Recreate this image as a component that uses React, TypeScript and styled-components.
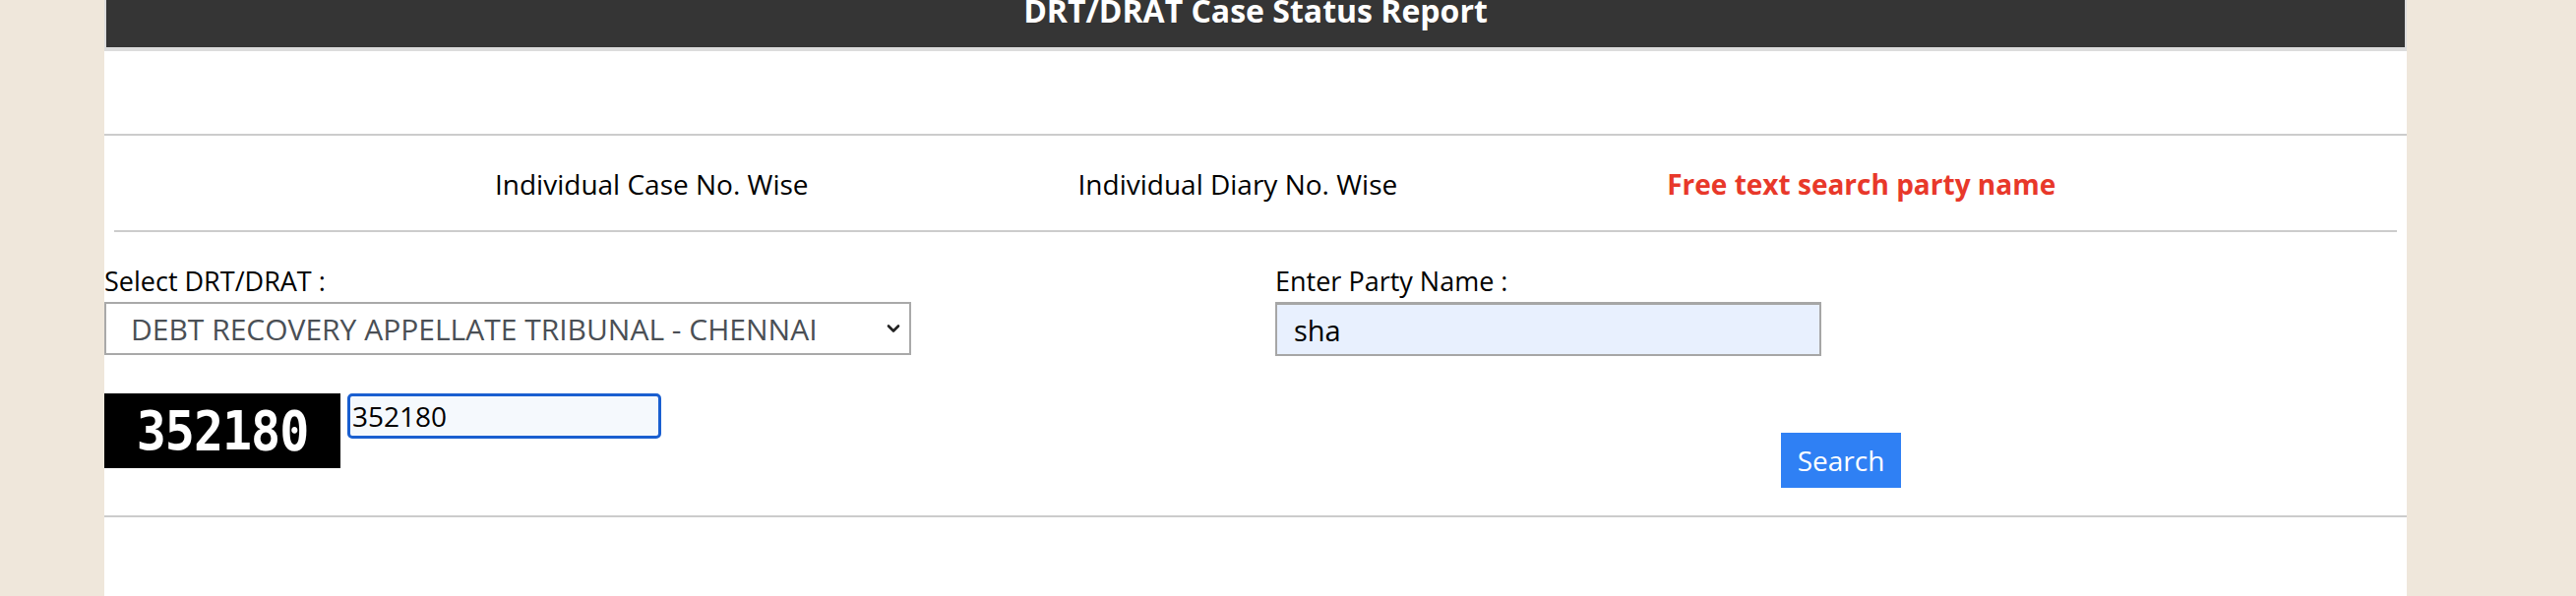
import React, { useState } from 'react';
import styled, { createGlobalStyle } from 'styled-components';

const GlobalStyle = createGlobalStyle`
    html, body {
        margin: 0;
        padding: 0;
        background: #efe7db;
        font-family: "Open Sans", "Noto Sans", Arial, sans-serif;
        color: #000;
    }
    * {
        box-sizing: border-box;
    }
`;

const StyledPage = styled.div`
    width: 2340px;
    min-height: 606px;
    margin-left: 106px;
    background: #fff;
`;

const StyledHeader = styled.header`
    height: 52px;
    background: #353535;
    border: 2px solid #dcdcdc;
    border-top: 0;
    border-bottom-width: 4px;
    overflow: hidden;
`;

const StyledTitle = styled.h1`
    margin: -5px 0 0;
    font-size: 32px;
    line-height: 32px;
    font-weight: 700;
    color: #fff;
    text-align: center;
`;

const StyledSpacer = styled.div`
    height: 86px;
    border-bottom: 2px solid #cccccc;
`;

const StyledTabs = styled.ul`
    display: flex;
    gap: 274px;
    margin: 0 10px;
    padding: 29px 0 27px 387px;
    list-style: none;
    border-bottom: 2px solid #cccccc;
`;

const StyledTab = styled.li<{ $active?: boolean }>`
    font-size: 28px;
    line-height: 40px;
    font-weight: ${({ $active }) => ($active ? 700 : 400)};
    color: ${({ $active }) => ($active ? '#e8382a' : '#000')};
    white-space: nowrap;
    cursor: pointer;
`;

const StyledForm = styled.form`
    display: grid;
    grid-template-columns: 1190px 1fr;
    padding: 32px 0 28px;
    border-bottom: 2px solid #cccccc;
`;

const StyledColumn = styled.div<{ $center?: boolean }>`
    display: flex;
    flex-direction: column;
    align-items: ${({ $center }) => ($center ? 'stretch' : 'flex-start')};
`;

const StyledLabel = styled.label`
    font-size: 27px;
    line-height: 36px;
    margin-bottom: 3px;
`;

const StyledSelectBox = styled.div`
    display: flex;
    align-items: center;
    width: 820px;
    height: 54px;
    border: 2px solid #a9a9a9;
    background: #fff;
    padding-right: 9px;
`;

const StyledSelect = styled.select`
    flex: 1;
    height: 100%;
    appearance: none;
    border: 0;
    outline: none;
    background: transparent;
    padding-left: 25px;
    font-family: "Open Sans", sans-serif;
    font-size: 30px;
    color: #4a4f55;
`;

const StyledCaptchaRow = styled.div`
    display: flex;
    align-items: flex-start;
    gap: 7px;
    margin-top: 39px;
`;

const StyledCaptcha = styled.div`
    display: flex;
    align-items: center;
    justify-content: center;
    width: 240px;
    height: 76px;
    background: #000;
    color: #fff;
    font-family: "DejaVu Sans Mono", "Liberation Mono", monospace;
    font-weight: 700;
    font-size: 50px;
    letter-spacing: -1px;
    filter: blur(0.7px);
    user-select: none;

    span {
        display: inline-block;
        transform: scaleY(1.12);
    }
`;

const StyledCaptchaInput = styled.input`
    width: 319px;
    height: 46px;
    border: 3px solid #1a5fd0;
    border-radius: 5px;
    background: #f5f9fd;
    padding: 0 2px;
    font-family: "Open Sans", sans-serif;
    font-size: 28px;
    color: #000;
    outline: none;
    caret-color: #000;
`;

const StyledPartyInput = styled.input`
    width: 555px;
    height: 55px;
    border: 2px solid #a6a6a6;
    border-top-width: 3px;
    background: #e8f0fe;
    padding: 0 17px;
    font-family: "Open Sans", sans-serif;
    font-size: 29px;
    color: #000;
    outline: none;
`;

const StyledButtonRow = styled.div`
    display: flex;
    justify-content: center;
    margin-top: 78px;
`;

const StyledButton = styled.button`
    height: 56px;
    padding: 0 17px;
    border: 0;
    background: #2f80f4;
    color: #fff;
    font-family: "Open Sans", sans-serif;
    font-size: 28px;
    cursor: pointer;
`;

const ChevronIcon = () => (
    <svg width="14" height="10" viewBox="0 0 14 10" aria-hidden="true">
        <path d="M2 2.5 L7 7.5 L12 2.5" fill="none" stroke="#222" strokeWidth="2.6" strokeLinecap="round" strokeLinejoin="round" />
    </svg>
);

const tabs = [
    { label: 'Individual Case No. Wise', active: false },
    { label: 'Individual Diary No. Wise', active: false },
    { label: 'Free text search party name', active: true },
];

const App: React.FC = () => {
    const [tribunal, setTribunal] = useState('DRAT-CHENNAI');
    const [party, setParty] = useState('sha');
    const [captcha, setCaptcha] = useState('352180');

    const handleSubmit = (event: React.FormEvent<HTMLFormElement>) => {
        event.preventDefault();
    };

    return (
        <>
            <GlobalStyle />
            <StyledPage>
                <StyledHeader>
                    <StyledTitle>DRT/DRAT Case Status Report</StyledTitle>
                </StyledHeader>
                <StyledSpacer />
                <StyledTabs>
                    {tabs.map(tab => (
                        <StyledTab key={tab.label} $active={tab.active}>{tab.label}</StyledTab>
                    ))}
                </StyledTabs>
                <StyledForm onSubmit={handleSubmit}>
                    <StyledColumn>
                        <StyledLabel htmlFor="tribunal">Select DRT/DRAT :</StyledLabel>
                        <StyledSelectBox>
                            <StyledSelect id="tribunal" value={tribunal} onChange={e => setTribunal(e.target.value)}>
                                <option value="DRAT-CHENNAI">DEBT RECOVERY APPELLATE TRIBUNAL - CHENNAI</option>
                                <option value="DRAT-DELHI">DEBT RECOVERY APPELLATE TRIBUNAL - DELHI</option>
                                <option value="DRAT-MUMBAI">DEBT RECOVERY APPELLATE TRIBUNAL - MUMBAI</option>
                            </StyledSelect>
                            <ChevronIcon />
                        </StyledSelectBox>
                        <StyledCaptchaRow>
                            <StyledCaptcha><span>352180</span></StyledCaptcha>
                            <StyledCaptchaInput
                                value={captcha}
                                onChange={e => setCaptcha(e.target.value)}
                                autoFocus
                                onFocus={e => e.currentTarget.setSelectionRange(6, 6)}
                            />
                        </StyledCaptchaRow>
                    </StyledColumn>
                    <StyledColumn $center>
                        <StyledLabel htmlFor="party">Enter Party Name :</StyledLabel>
                        <StyledPartyInput id="party" value={party} onChange={e => setParty(e.target.value)} />
                        <StyledButtonRow>
                            <StyledButton type="submit">Search</StyledButton>
                        </StyledButtonRow>
                    </StyledColumn>
                </StyledForm>
            </StyledPage>
        </>
    );
};

export default App;
